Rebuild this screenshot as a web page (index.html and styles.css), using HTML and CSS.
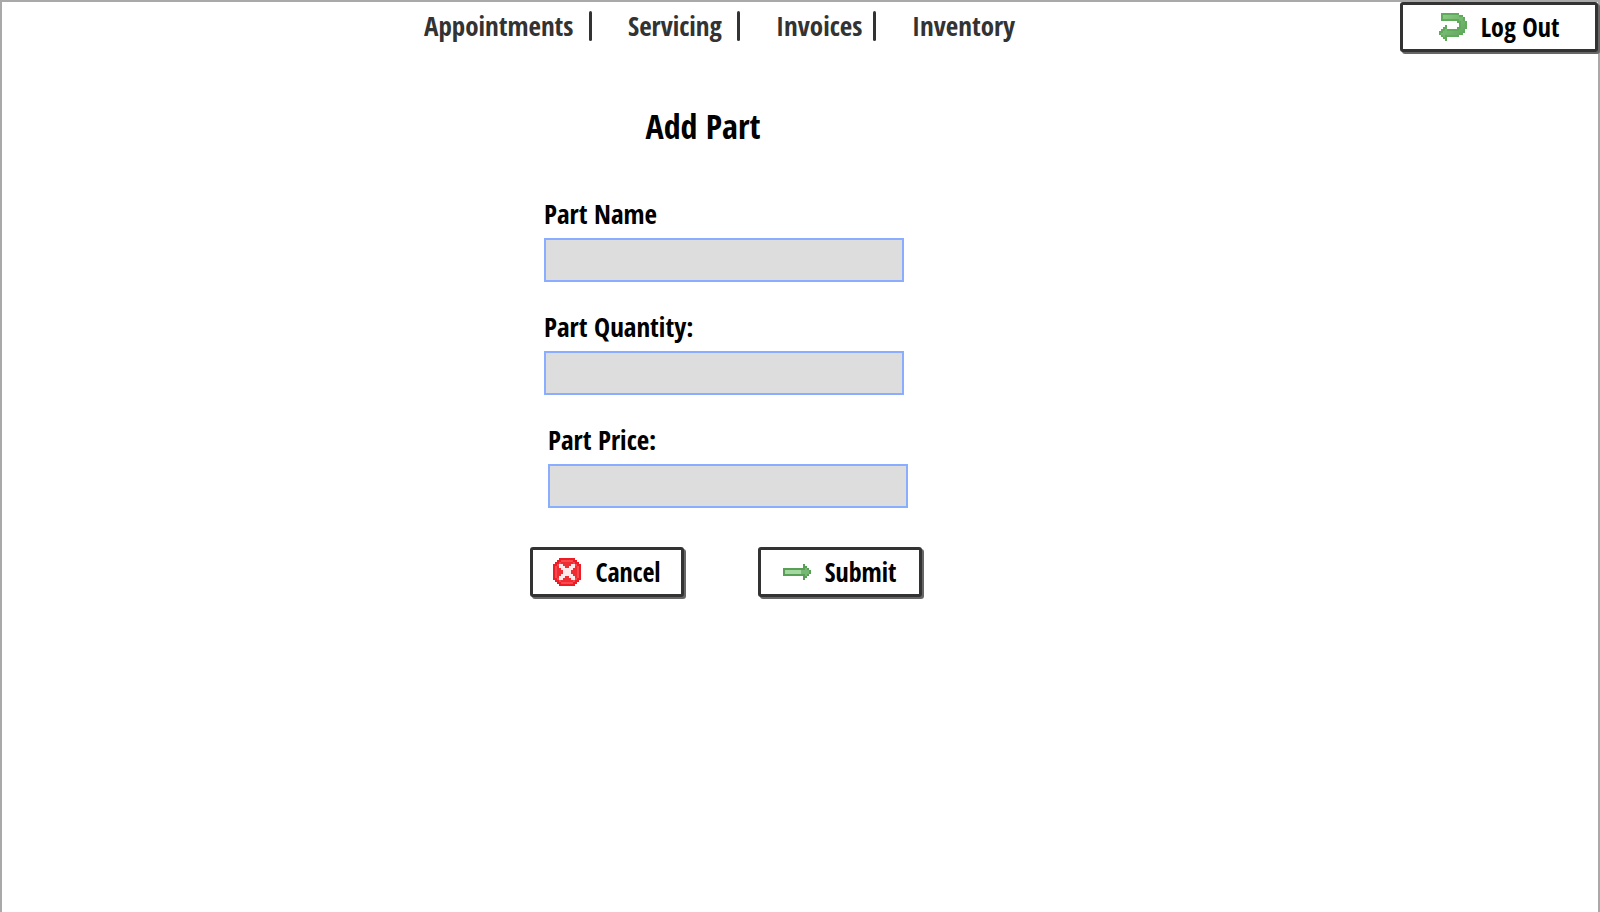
FILE: index.html
```html
<!DOCTYPE html>
<html lang="en">
<head>
<meta charset="utf-8">
<title>Add Part</title>
<link rel="stylesheet" href="styles.css">
</head>
<body>
<div class="page">
  <header class="topbar">
    <nav class="nav" aria-label="Main">
      <div class="nav-item"><a href="#">Appointments</a><span class="divider"></span></div>
      <div class="nav-item"><a href="#">Servicing</a><span class="divider"></span></div>
      <div class="nav-item"><a href="#">Invoices</a><span class="divider"></span></div>
      <div class="nav-item"><a href="#">Inventory</a></div>
    </nav>
    <button class="button button-logout" type="button">
      <svg class="icon" viewBox="0 0 14 14" aria-hidden="true">
        <defs><linearGradient id="turn" x2="1" y2="1"><stop offset="0" stop-color="#8ccb83"/><stop offset="1" stop-color="#5ea35d"/></linearGradient></defs>
        <path fill="#5fab5b" d="M1 0h9v1h2v1h1v2h1v4h-1v2h-1v1h-2v1H4v2H3v-1H2v-1H1v-1H0V9h1V8h1V7h1V6h1v2h5V7h1V5H9V4H1z"/>
        <path fill="url(#turn)" d="M2 1h8v1h2v2h1v4h-1v2h-2v1H3v1H2v-1H1v-1h1V9h1V8h1v1h6V8h1V4h-1V3H2z"/>
      </svg>
      Log Out
    </button>
  </header>
  <main class="content">
    <h1 class="title">Add Part</h1>
    <form class="form" id="part-form">
      <div class="field">
        <label for="part-name">Part Name</label>
        <input id="part-name" type="text">
      </div>
      <div class="field">
        <label for="part-quantity">Part Quantity:</label>
        <input id="part-quantity" type="text">
      </div>
      <div class="field field-end">
        <label for="part-price">Part Price:</label>
        <input id="part-price" type="text">
      </div>
    </form>
    <div class="actions">
      <button class="button" type="button">
        <svg class="icon" viewBox="0 0 14 14" aria-hidden="true">
          <path fill="#ee1c25" d="M3 0h8v1h1v1h1v1h1v8h-1v1h-1v1h-1v1H3v-1H2v-1H1v-1H0V3h1V2h1V1h1z"/>
          <path fill="#f7494d" d="M4 1h6v1h1v1h1v1h1v6h-1v1h-1v1h-1v1H4v-1H3v-1H2v-1H1V4h1V3h1V2h1z"/>
          <path fill="#ee2c31" d="M4 2h6v1h1v1h1v6h-1v1h-1v1H4v-1H3v-1H2V4h1V3h1z"/>
          <path fill="#fbe9ec" d="M3 3h2v1h1v1h2V4h1V3h2v2h-1v1H9v2h1v1h1v2H9v-1H8V9H6v1H5v1H3V9h1V8h1V6H4V5H3z"/>
        </svg>
        Cancel
      </button>
      <button class="button button-submit" type="submit" form="part-form">
        <svg class="icon" viewBox="0 0 14 14" aria-hidden="true">
          <path fill="#58a056" d="M0 5h10V3h1v1h1v1h1v1h1v2h-1v1h-1v1h-1v1h-1V9H0z"/>
          <path fill="#76b773" d="M1 6h10V5h1v1h1v2h-1v1h-1V8H1z"/>
          <path fill="#a5d8a0" d="M1 6h8v2H1z"/>
        </svg>
        Submit
      </button>
    </div>
  </main>
</div>
</body>
</html>
```
FILE: styles.css
```css
* { box-sizing: border-box; }

body {
  margin: 0;
  background: #fff;
  color: #000;
  font: 600 27px/32px "Open Sans Condensed", Lato, sans-serif;
}

.page {
  min-height: 100vh;
  border: 2px solid #a9a9a9;
  border-bottom: 0;
}

.topbar {
  display: flex;
  align-items: flex-start;
}

.nav {
  flex: 1;
  display: grid;
  grid-template-columns: 168px 112px 100px 102px;
  justify-content: center;
  gap: 36px;
  padding: 8px 0 0 36px;
}

.nav-item {
  display: flex;
  align-items: center;
  justify-content: space-between;
}

.nav a {
  color: #333;
  text-decoration: none;
}

.divider {
  width: 3px;
  height: 30px;
  border-radius: 2px;
  background: #333;
}

.button {
  display: flex;
  align-items: center;
  justify-content: center;
  gap: 14px;
  height: 50px;
  padding: 0 20px;
  border: 3px solid #333;
  border-radius: 3px;
  background: #fff;
  box-shadow: 2px 2px 0 #666;
  color: #000;
  font: inherit;
  font-size: 26px;
}

.button-logout { width: 198px; }

.button-submit { width: 164px; }

.icon {
  width: 28px;
  height: 28px;
  shape-rendering: crispEdges;
}

.content {
  display: flex;
  flex-direction: column;
  align-items: center;
  padding: 54px 148px 0 0;
}

.title {
  margin: 0;
  padding: 0 46px 52px 0;
  font-size: 34px;
  line-height: 40px;
  font-weight: 600;
}

.form {
  display: flex;
  flex-direction: column;
  gap: 29px;
  width: 364px;
}

.field {
  display: flex;
  flex-direction: column;
  gap: 8px;
  width: 360px;
}

.field-end { align-self: flex-end; }

.field input {
  height: 44px;
  padding: 0 10px;
  border: 2px solid #8aadff;
  background: #ddd;
  font: inherit;
}

.actions {
  display: flex;
  gap: 74px;
  margin-top: 39px;
}
```
